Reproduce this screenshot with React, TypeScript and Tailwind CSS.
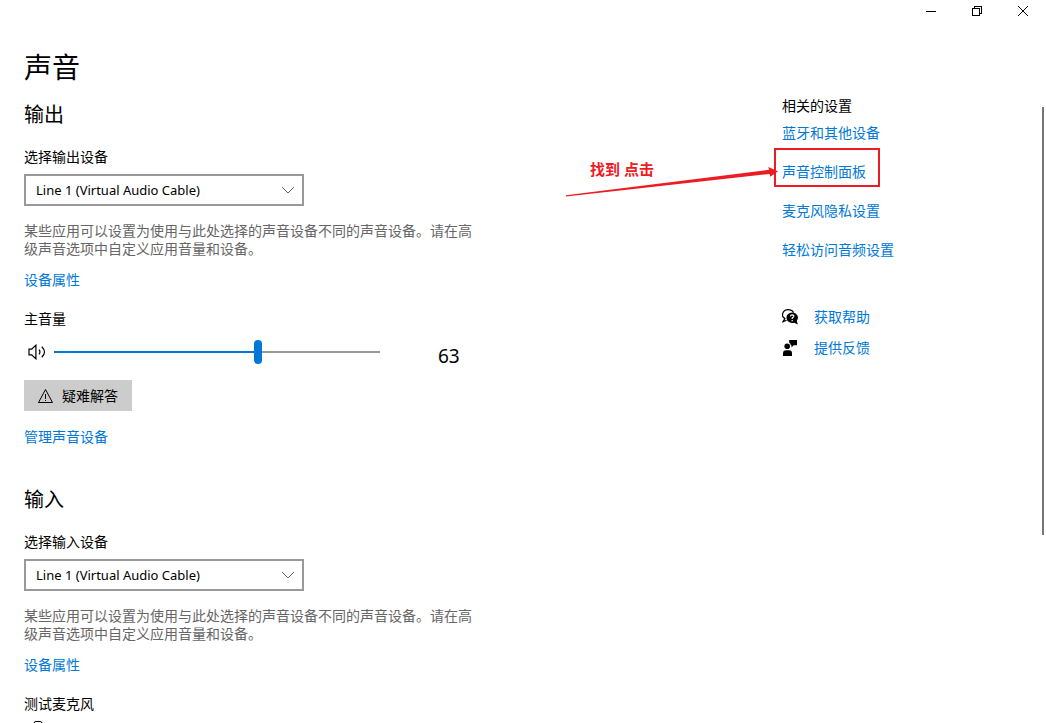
import { useId, useState } from "react";

const DEVICE = "Line 1 (Virtual Audio Cable)";
const HINT =
  "某些应用可以设置为使用与此处选择的声音设备不同的声音设备。请在高级声音选项中自定义应用音量和设备。";

function TextLink({ children, className = "" }: { children: React.ReactNode; className?: string }) {
  return (
    <a href="#" className={`block w-fit text-[#0078d7] hover:text-[#666] ${className}`}>
      {children}
    </a>
  );
}

function TitleBar() {
  const button = "flex h-full w-[46px] items-center justify-center hover:bg-gray-200";
  return (
    <header className="flex h-[22px] justify-end">
      <button type="button" aria-label="最小化" className={button}>
        <svg width="10" height="10" viewBox="0 0 10 10" shapeRendering="crispEdges">
          <path d="M0 5.5H10" stroke="#000" />
        </svg>
      </button>
      <button type="button" aria-label="还原" className={button}>
        <svg width="10" height="10" viewBox="0 0 10 10" fill="none" stroke="#000" shapeRendering="crispEdges">
          <path d="M.5 2.5h7v7h-7zM2.5 2.5v-2h7v7h-2" />
        </svg>
      </button>
      <button type="button" aria-label="关闭" className={button}>
        <svg width="10" height="10" viewBox="0 0 10 10" stroke="#000">
          <path d="M0 0L10 10M10 0L0 10" />
        </svg>
      </button>
    </header>
  );
}

function DevicePicker({ title, label }: { title: string; label: string }) {
  const id = useId();
  return (
    <>
      <h2 className="text-xl leading-7">{title}</h2>
      <label htmlFor={id} className="mt-[18px] block">
        {label}
      </label>
      <div className="relative mt-[7px] w-[280px] max-w-full">
        <select
          id={id}
          className="block h-8 w-full appearance-none border-2 border-[#999] bg-white px-[10px] text-[13px] text-black"
        >
          <option>{DEVICE}</option>
        </select>
        <svg
          className="pointer-events-none absolute top-3 right-[9px]"
          width="14"
          height="8"
          viewBox="0 0 14 8"
          fill="none"
          stroke="#666"
        >
          <path d="M1 1L7 7L13 1" />
        </svg>
      </div>
      <p className="mt-4 leading-[18px] text-[#666]">{HINT}</p>
      <TextLink className="mt-3">设备属性</TextLink>
    </>
  );
}

function VolumeSlider() {
  const [volume, setVolume] = useState(63);
  const id = useId();
  return (
    <>
      <label htmlFor={id} className="mt-[19px] block">
        主音量
      </label>
      <div className="mt-[11px] flex items-start">
        <svg className="mt-1 ml-1 shrink-0" width="18" height="16" viewBox="0 0 18 16" fill="none" stroke="#000">
          <path
            strokeWidth="1.2"
            d="M1 5.2H3.6L7.9 1.2V14.8L3.6 10.8H1ZM11 5.7Q12.9 8 11 10.3M13.8 2.8Q19.2 8 13.8 13.2"
          />
        </svg>
        <input
          id={id}
          type="range"
          min={0}
          max={100}
          value={volume}
          onChange={(e) => setVolume(Number(e.target.value))}
          className="ml-2 h-6 w-[326px] min-w-0 appearance-none bg-[length:100%_2px] bg-center bg-no-repeat [&::-webkit-slider-thumb]:h-6 [&::-webkit-slider-thumb]:w-2 [&::-webkit-slider-thumb]:appearance-none [&::-webkit-slider-thumb]:rounded-full [&::-webkit-slider-thumb]:bg-[#0078d7]"
          style={{
            backgroundImage: `linear-gradient(to right, #0078d7 ${volume}%, #999 ${volume}%)`,
          }}
        />
        <output htmlFor={id} className="ml-[58px] text-[19px] leading-8">
          {volume}
        </output>
      </div>
    </>
  );
}

function Callout() {
  return (
    <>
      <span className="pointer-events-none absolute -top-[14px] -right-[14px] -bottom-[5px] -left-2 border-2 border-[#ed1c24]" />
      <span className="pointer-events-none absolute -top-[13px] right-full mr-[4px] h-12 w-[212px]">
        <strong className="absolute top-[10px] left-6 text-[15px] leading-5 whitespace-nowrap text-[#ed1c24]">
          找到 点击
        </strong>
        <svg className="absolute inset-0" width="212" height="48" viewBox="0 0 212 48" fill="#ed1c24">
          <path d="M0 46.2L203 20.8L202.4 18L212 22.3L204.3 27.8L203.6 25L0 47.4Z" />
        </svg>
      </span>
    </>
  );
}

function RelatedSettings() {
  return (
    <aside className="w-[240px] shrink-0 pt-[74px]">
      <h3>相关的设置</h3>
      <nav className="mt-[7px] flex flex-col items-start gap-[19px]">
        <TextLink>蓝牙和其他设备</TextLink>
        <div className="relative">
          <TextLink>声音控制面板</TextLink>
          <Callout />
        </div>
        <TextLink>麦克风隐私设置</TextLink>
        <TextLink>轻松访问音频设置</TextLink>
      </nav>
      <div className="mt-[47px] flex flex-col gap-[11px]">
        <div className="flex items-center gap-4">
          <svg width="16" height="16" viewBox="0 0 16 16">
            <path
              d="M3.2 9.2L.8 12.8L4.6 11.2M3.2 9.6C.6 8.6 0 6.4 .8 4.2C2 1.2 5.2 .2 8 .8C9.8 1.2 11 2.2 11.6 3.4"
              fill="none"
              stroke="#000"
              strokeWidth="1.2"
            />
            <path d="M10.2 3.4A5.8 5.3 0 0 1 14.8 11.8L15.8 15.4L12.2 13.7A5.8 5.3 0 1 1 10.2 3.4Z" />
            <path d="M8.4 7.3Q8.6 5.8 10.2 5.8Q12 5.9 11.8 7.4Q11.6 8.3 10.2 9V10.1" fill="none" stroke="#fff" strokeWidth="1.2" />
            <path d="M9.6 11H10.8V12.2H9.6Z" fill="#fff" />
          </svg>
          <TextLink>获取帮助</TextLink>
        </div>
        <div className="flex items-center gap-4">
          <svg width="16" height="16" viewBox="0 0 16 16">
            <circle cx="5.2" cy="6.2" r="2.8" />
            <path d="M1 16V13.4Q1 10.3 4 10.3H7Q10 10.3 10 13.4V16ZM7.2 0H15V5.2H11.6L9.5 7.4V5.2H8.8Q8.7 3.7 7.2 2.8Z" />
          </svg>
          <TextLink>提供反馈</TextLink>
        </div>
      </div>
    </aside>
  );
}

export default function App() {
  return (
    <div className="relative flex h-screen flex-col overflow-hidden bg-white font-['Noto_Sans','Noto_Sans_CJK_SC',sans-serif] text-sm text-black">
      <TitleBar />
      <div className="flex min-h-0 flex-1 gap-6 overflow-hidden px-6">
        <main className="min-w-0 flex-1">
          <div className="max-w-[450px] pt-[27px]">
            <h1 className="text-[28px] leading-9">声音</h1>
            <section className="mt-4">
              <DevicePicker title="输出" label="选择输出设备" />
              <VolumeSlider />
              <button type="button" className="mt-2 flex h-[31px] items-center gap-2 bg-[#ccc] px-[14px]">
                <svg width="16" height="16" viewBox="0 0 16 16" fill="none" stroke="#000">
                  <path d="M7.5 1.5L14.5 14.5H.5ZM7.5 6V11M7.5 12V13" />
                </svg>
                疑难解答
              </button>
              <TextLink className="mt-4">管理声音设备</TextLink>
            </section>
            <section className="mt-[39px]">
              <DevicePicker title="输入" label="选择输入设备" />
              <h3 className="mt-[19px]">测试麦克风</h3>
              <svg className="mt-[7px] ml-[9px]" width="10" height="16" viewBox="0 0 10 16" fill="none" stroke="#000">
                <rect x="1" y=".5" width="8" height="11" rx="2" />
              </svg>
            </section>
          </div>
        </main>
        <RelatedSettings />
      </div>
      <div className="absolute top-[107px] right-[2px] h-[428px] w-[2px] bg-[#767676]" />
    </div>
  );
}
